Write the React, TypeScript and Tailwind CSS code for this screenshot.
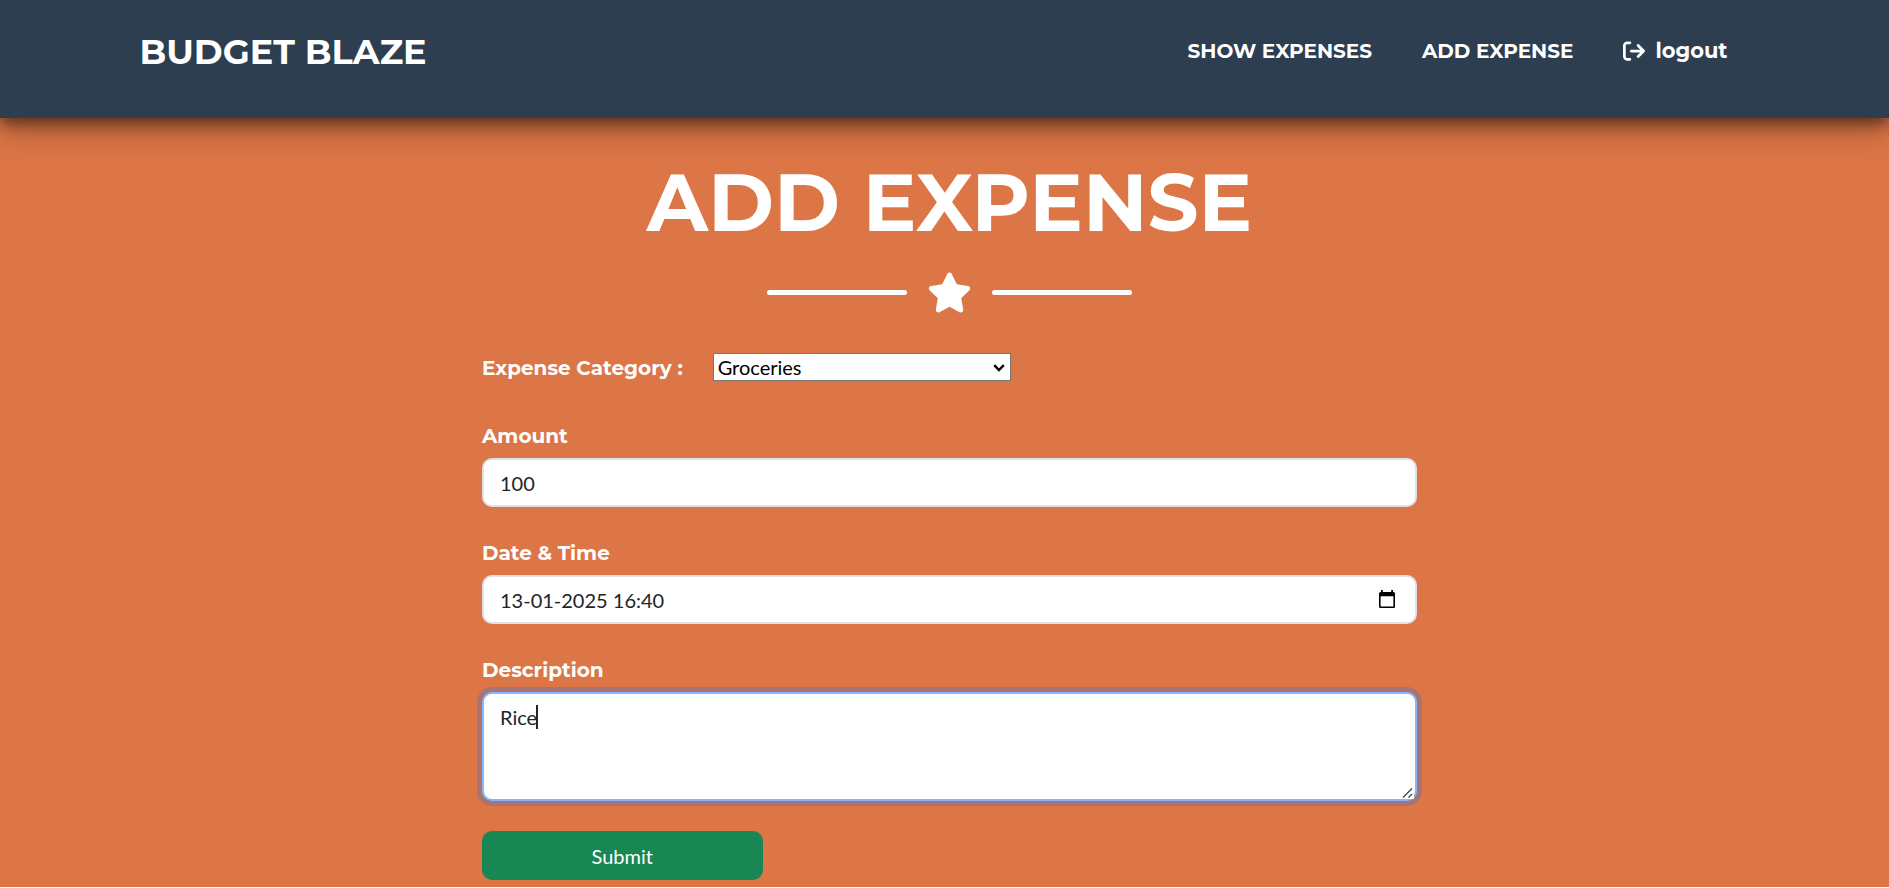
import { useState } from "react";
import { FaStar, FaArrowRightFromBracket } from "react-icons/fa6";

const heading = "font-['Montserrat',sans-serif] font-bold";
const label = "block pt-[2px] font-['Montserrat',sans-serif] font-bold text-[20px] leading-[28px] text-white";
const field =
  "block w-full rounded-[10px] border-2 bg-white px-4 text-[20px] leading-[30px] text-[#212529] outline-none";

function Navbar() {
  return (
    <nav className="relative z-10 bg-[#2c3e50] pt-[26px] pb-[42px] shadow-[0_6px_12px_rgba(0,0,0,0.4),0_12px_28px_rgba(0,0,0,0.3)]">
      <div className="mx-auto flex max-w-[1650px] items-center justify-between pr-[42px] pl-5 text-white">
        <a href="#home" className={`${heading} pt-[2px] text-[35px] leading-[48px]`}>
          BUDGET BLAZE
        </a>
        <div className={`${heading} flex items-center gap-[50px] text-[20px] leading-[30px]`}>
          <a href="#expenses">SHOW EXPENSES</a>
          <a href="#add">ADD EXPENSE</a>
          <a href="#logout" className="flex items-center gap-[10px] text-[21px]">
            <FaArrowRightFromBracket size={22} aria-hidden="true" />
            logout
          </a>
        </div>
      </div>
    </nav>
  );
}

function Divider() {
  return (
    <div className="mt-[19px] flex items-center justify-center gap-5 text-white">
      <span className="h-[5px] w-[140px] rounded-sm bg-white" />
      <FaStar size={45} aria-hidden="true" />
      <span className="h-[5px] w-[140px] rounded-sm bg-white" />
    </div>
  );
}

function ChevronIcon() {
  return (
    <svg
      viewBox="0 0 12 8"
      className="pointer-events-none absolute top-[11px] right-[6px] h-2 w-3"
      fill="none"
      stroke="#000"
      strokeWidth="2.4"
      aria-hidden="true"
    >
      <path d="M1.2 1.2 6 6l4.800-4.800" />
    </svg>
  );
}

function CalendarIcon() {
  return (
    <svg viewBox="0 0 16 18" className="h-[18px] w-4" aria-hidden="true">
      <path
        fill="#000"
        fillRule="evenodd"
        d="M2 0h1.800v2h8.400V0H14v2h.5A1.500 1.500 0 0 1 16 3.500v13a1.500 1.500 0 0 1-1.500 1.500h-13A1.500 1.500 0 0 1 0 16.500v-13A1.500 1.500 0 0 1 1.500 2H2zM1.600 6.200v10.200h12.800V6.200z"
      />
    </svg>
  );
}

function ResizeGrip() {
  return (
    <svg
      viewBox="0 0 12 12"
      className="pointer-events-none absolute right-[3px] bottom-[2px] size-3 bg-white"
      fill="none"
      stroke="#444"
      strokeWidth="1.3"
      aria-hidden="true"
    >
      <path d="M1 10.500 10 1.500M6.500 10.500 10 7" />
    </svg>
  );
}

export default function App() {
  const [category, setCategory] = useState("Groceries");
  return (
    <div className="bg-[#dc7646] pb-[7px] font-['Lato',sans-serif]">
      <Navbar />
      <div className="pl-[10px]">
        <main className="mx-auto max-w-[935px] pt-[37px]">
          <h1 className={`${heading} text-center text-[80px] leading-[96px] text-white`}>ADD EXPENSE</h1>
          <Divider />
          <form className="mt-[37px]" onSubmit={(e) => e.preventDefault()}>
            <div className="flex items-center gap-[30px]">
              <label htmlFor="category" className={label}>
                Expense Category :
              </label>
              <div className="relative">
                <select
                  id="category"
                  value={category}
                  onChange={(e) => setCategory(e.target.value)}
                  className="block h-7 w-[298px] appearance-none border border-[#767676] bg-white px-1 text-[20px] leading-[26px] text-black"
                >
                  <option>Groceries</option>
                </select>
                <ChevronIcon />
              </div>
            </div>
            <div className="mt-[38px]">
              <label htmlFor="amount" className={label}>
                Amount
              </label>
              <input
                id="amount"
                inputMode="decimal"
                defaultValue="100"
                className={`${field} mt-2 h-[49px] border-[#dee2e6]`}
              />
            </div>
            <div className="mt-[30px]">
              <label htmlFor="date" className={label}>
                Date &amp; Time
              </label>
              <div className="relative mt-2">
                <input
                  id="date"
                  defaultValue="13-01-2025 16:40"
                  className={`${field} h-[49px] border-[#dee2e6]`}
                />
                <button type="button" aria-label="Open calendar" className="absolute top-[15px] right-[22px]">
                  <CalendarIcon />
                </button>
              </div>
            </div>
            <div className="mt-[30px]">
              <label htmlFor="description" className={label}>
                Description
              </label>
              <div className="relative mt-2">
                <textarea
                  id="description"
                  defaultValue="Rice"
                  className={`${field} h-[109px] resize-y border-[#86b7fe] py-2 caret-transparent shadow-[0_0_0_5px_rgba(13,110,253,0.25)]`}
                />
                <span className="pointer-events-none absolute top-[13px] left-[54px] h-6 w-[2px] bg-[#212529]" />
                <ResizeGrip />
              </div>
            </div>
            <button
              type="submit"
              className="mt-[30px] block h-[49px] w-[30%] rounded-[10px] bg-[#198754] text-[20px] leading-[30px] text-white"
            >
              Submit
            </button>
          </form>
        </main>
      </div>
    </div>
  );
}
